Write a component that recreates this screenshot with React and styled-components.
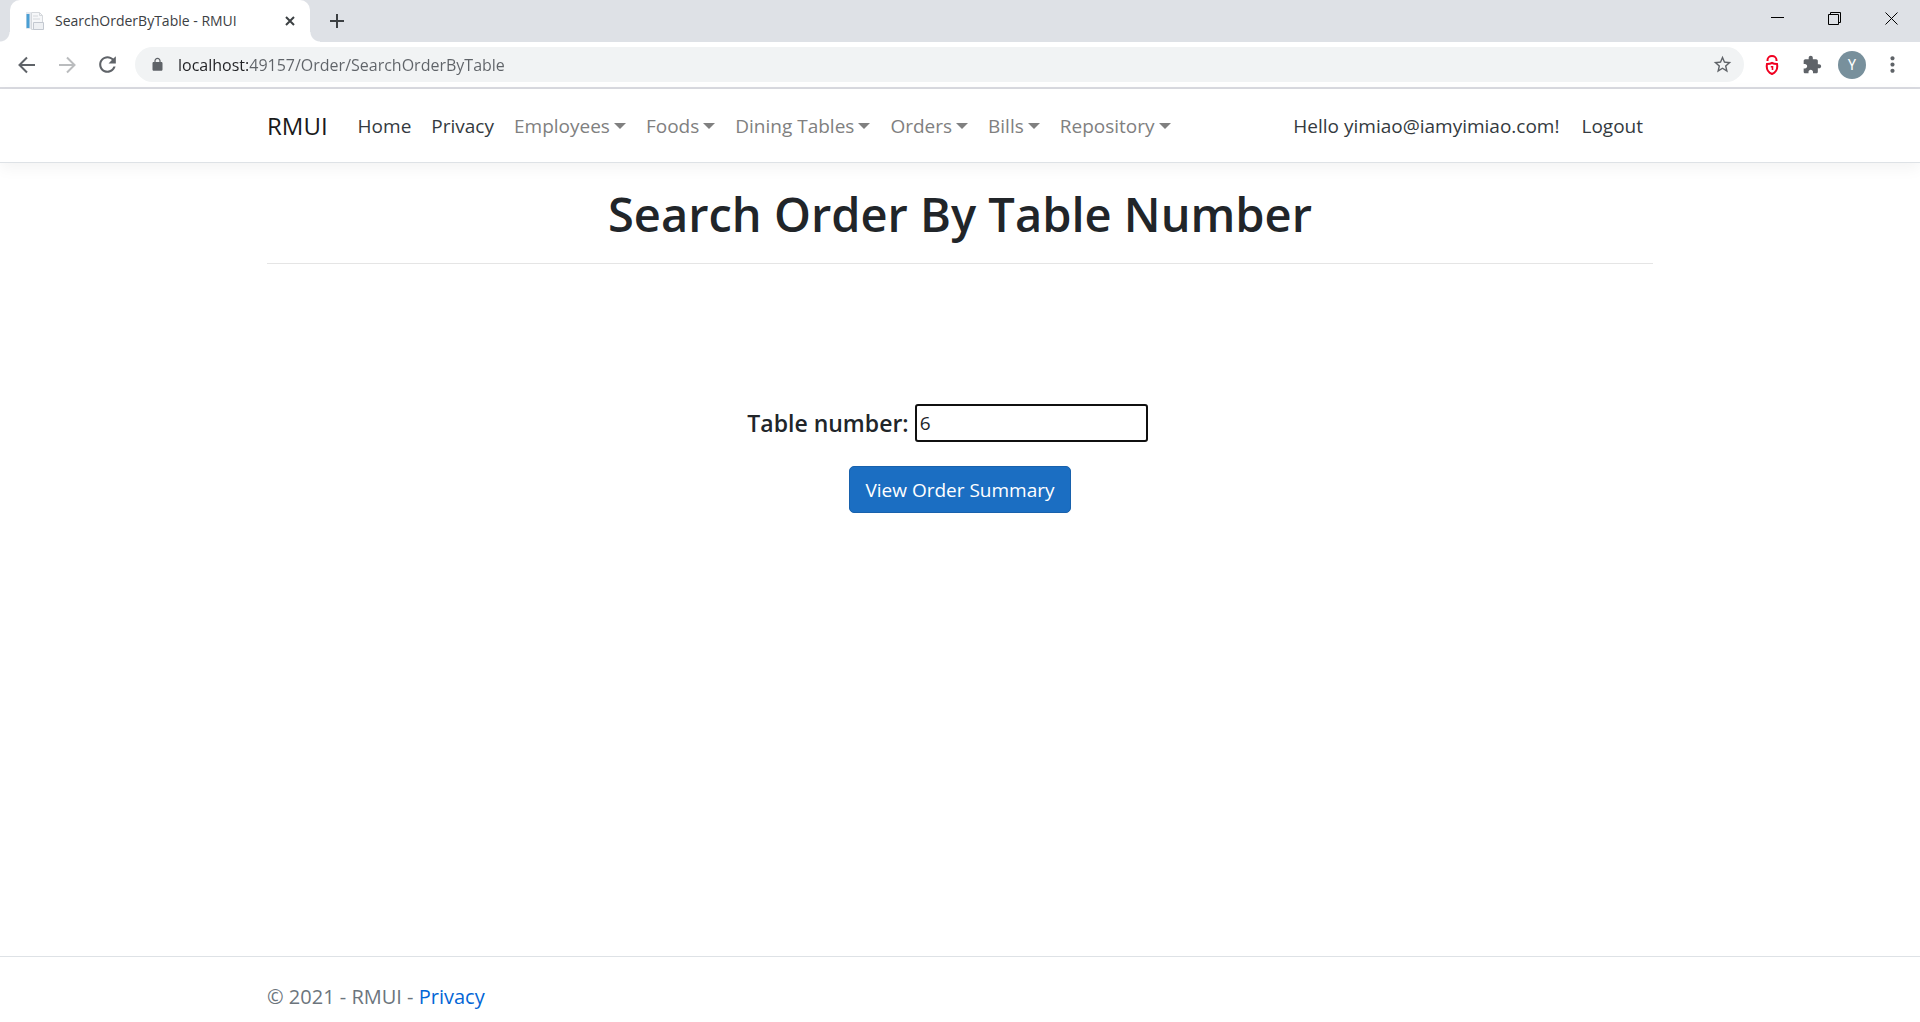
import React, { useState } from "react";
import styled, { createGlobalStyle } from "styled-components";

const GlobalStyle = createGlobalStyle`
  *, *::before, *::after { box-sizing: border-box; }
  body {
    margin: 0;
    background: #fff;
    color: #212529;
    font: 400 19px/30px "Open Sans", "Noto Sans", sans-serif;
  }
  button, input { font: inherit; color: inherit; }
`;

const Window = styled.div`
  display: flex;
  flex-direction: column;
  min-height: 100vh;
`;

const TabStrip = styled.div`
  display: flex;
  justify-content: space-between;
  height: 42px;
  background: #dee1e6;
`;

const TabGroup = styled.div`
  display: flex;
  padding-left: 10px;
`;

const Tab = styled.div`
  position: relative;
  display: flex;
  align-items: center;
  gap: 10px;
  width: 300px;
  padding: 0 12px 0 15px;
  border-radius: 10px 10px 0 0;
  background: #fff;
  &::before, &::after {
    content: "";
    position: absolute;
    bottom: 0;
    width: 10px;
    height: 10px;
  }
  &::before { left: -10px; background: radial-gradient(circle at 0 0, #dee1e6 9px, #fff 10px); }
  &::after { right: -10px; background: radial-gradient(circle at 100% 0, #dee1e6 9px, #fff 10px); }
`;

const TabTitle = styled.span`
  flex: 1;
  font-size: 14px;
  line-height: 20px;
  color: #3c4043;
  white-space: nowrap;
`;

const IconButton = styled.button`
  display: flex;
  align-items: center;
  justify-content: center;
  flex: none;
  width: ${(p) => p.$width || 40}px;
  height: ${(p) => p.$height || 40}px;
  padding: 0;
  border: 0;
  background: none;
  color: ${(p) => p.$color || "#5f6368"};
  svg { display: block; }
`;

const WindowControls = styled.div`
  display: flex;
`;

const Toolbar = styled.div`
  display: flex;
  align-items: center;
  height: 47px;
  padding: 0 8px 0 7px;
  border-bottom: 2px solid #d9dae0;
  background: #fff;
`;

const AddressBar = styled.div`
  flex: 1;
  display: flex;
  align-items: center;
  height: 35px;
  margin: 0 8px;
  padding: 0 2px 0 15px;
  border-radius: 18px;
  background: #f1f3f4;
  color: #5f6368;
`;

const AddressInput = styled.input`
  flex: 1;
  min-width: 0;
  height: 30px;
  margin-left: 13px;
  padding: 0;
  border: 0;
  outline: 0;
  font-size: 16px;
  color: #5f6368;
  background: linear-gradient(to right, #202124 70px, #5f6368 70px);
  background-clip: text;
  -webkit-text-fill-color: transparent;
`;

const Avatar = styled.span`
  display: flex;
  align-items: center;
  justify-content: center;
  width: 28px;
  height: 28px;
  border-radius: 50%;
  background: #78909c;
  color: #fff;
  font: 400 14px/20px Roboto, sans-serif;
`;

const Container = styled.div`
  width: 100%;
  max-width: 1426px;
  margin: 0 auto;
  padding: 0 20px;
`;

const Header = styled.header`
  border-bottom: 1px solid #dee2e6;
  box-shadow: 0 5px 15px rgba(0, 0, 0, 0.05);
`;

const Nav = styled.nav`
  display: flex;
  align-items: center;
  height: 73px;
`;

const Brand = styled.a`
  margin-right: 20px;
  font-size: 24px;
  line-height: 38px;
  color: #1a1a1a;
  text-decoration: none;
`;

const NavList = styled.ul`
  display: flex;
  align-items: center;
  gap: ${(p) => (p.$end ? "2px" : "0")};
  margin: ${(p) => (p.$end ? "0 0 0 auto" : "0")};
  padding: 0;
  list-style: none;
`;

const NavLink = styled.a`
  display: flex;
  align-items: center;
  gap: 4px;
  padding: 10px;
  color: ${(p) => (p.$muted ? "#808080" : "#343a40")};
  text-decoration: none;
  white-space: nowrap;
`;

const Caret = styled.span`
  border-top: 6px solid currentColor;
  border-left: 6px solid transparent;
  border-right: 6px solid transparent;
`;

const Main = styled.main`
  flex: 1;
  text-align: center;
`;

const Title = styled.h1`
  margin: 0;
  padding: 21px 0 18px;
  border-bottom: 1px solid #e5e5e5;
  font-size: 47px;
  line-height: 61px;
  font-weight: 600;
`;

const Form = styled.form`
  display: flex;
  flex-direction: column;
  align-items: center;
  gap: 24px;
  padding-top: 140px;
`;

const Field = styled.div`
  display: flex;
  align-items: center;
  gap: 6px;
  padding-right: 25px;
`;

const Label = styled.label`
  font-size: 23px;
  line-height: 30px;
  font-weight: 600;
`;

const NumberInput = styled.input`
  width: 233px;
  height: 38px;
  padding: 0 3px;
  border: 2px solid #101010;
  border-radius: 3px;
  outline: 0;
  background: #fff;
`;

const SubmitButton = styled.button`
  height: 47px;
  padding: 0 15px;
  border: 1px solid #1861ac;
  border-radius: 5px;
  background: #1b6ec2;
  color: #fff;
`;

const Footer = styled.footer`
  padding: 21px 0 6px;
  border-top: 1px solid #dee2e6;
  color: #6c757d;
  font-size: 20px;
  line-height: 38px;
`;

const FooterLink = styled.a`
  color: #0366d6;
  text-decoration: none;
`;

const Favicon = () => (
  <svg width="20" height="20" viewBox="0 0 20 20" aria-hidden="true">
    <path d="M1 1h5v17H1z" fill="#e6e9ee" />
    <path d="M6.500 1.500h8l3 3v14h-11z" fill="#f6f7f9" stroke="#d5d8dc" />
    <path d="M14.500 1.500v3h3" fill="none" stroke="#d5d8dc" />
    <path d="M1.500 3h3v14h-3z" fill="#4a9fd4" />
    <path d="M8 5h5M8 8h7" stroke="#d5d8dc" />
    <path d="M8.500 11.500h10v7h-10z" fill="#eef0f3" stroke="#c3c8d0" />
  </svg>
);

const Stroke = ({ d, size = 20, width = 2 }) => (
  <svg width={size} height={size} viewBox={`0 0 ${size} ${size}`} fill="none" stroke="currentColor" strokeWidth={width} aria-hidden="true">
    <path d={d} />
  </svg>
);

const Glyph = ({ d, size = 20 }) => (
  <svg width={size} height={size} viewBox="0 0 24 24" fill="currentColor" aria-hidden="true">
    <path d={d} />
  </svg>
);

const PadlockShield = () => (
  <svg width="14" height="20" viewBox="0 0 14 20" fill="none" stroke="#f00020" strokeWidth="2" aria-hidden="true">
    <path d="M2.500 6V5a4.500 4 0 0 1 9 0V6" />
    <path d="M7 8c1.500.8 3 1 5 1 .8 4-.5 8-5 10C2.500 17 1.200 13 2 9c2 0 3.500-.2 5-1z" />
    <path d="M7.500 11v4M5.800 11.800h2" strokeWidth="1.600" />
  </svg>
);

const icons = {
  reload: "M17.65 6.35C16.200 4.900 14.210 4 12 4c-4.420 0-7.990 3.580-7.990 8s3.570 8 7.990 8c3.730 0 6.840-2.550 7.730-6h-2.080c-.82 2.330-3.040 4-5.650 4-3.310 0-6-2.690-6-6s2.690-6 6-6c1.660 0 3.140.69 4.220 1.780L13 11h7V4l-2.350 2.350z",
  lock: "M18 8h-1V6c0-2.760-2.240-5-5-5S7 3.240 7 6v2H6c-1.100 0-2 .9-2 2v10c0 1.100.9 2 2 2h12c1.100 0 2-.9 2-2V10c0-1.100-.9-2-2-2zM9 6c0-1.660 1.340-3 3-3s3 1.340 3 3v2H9V6z",
  star: "M22 9.240l-7.190-.62L12 2 9.190 8.630 2 9.240l5.460 4.730L5.820 21 12 17.270 18.180 21l-1.630-7.030L22 9.240zM12 15.400l-3.760 2.270 1-4.280-3.320-2.880 4.380-.38L12 6.100l1.710 4.040 4.380.38-3.320 2.880 1 4.280L12 15.400z",
  puzzle: "M20.500 11H19V7c0-1.100-.9-2-2-2h-4V3.500C13 2.120 11.880 1 10.500 1S8 2.120 8 3.500V5H4c-1.100 0-1.990.9-1.990 2v3.800H3.500c1.490 0 2.700 1.210 2.700 2.700s-1.210 2.700-2.700 2.700H2V20c0 1.100.9 2 2 2h3.800v-1.500c0-1.490 1.210-2.700 2.700-2.700 1.490 0 2.700 1.210 2.700 2.700V22H17c1.100 0 2-.9 2-2v-4h1.500c1.380 0 2.500-1.120 2.500-2.500S21.880 11 20.500 11z",
  more: "M12 8c1.100 0 2-.9 2-2s-.9-2-2-2-2 .9-2 2 .9 2 2 2zm0 2c-1.100 0-2 .9-2 2s.9 2 2 2 2-.9 2-2-.9-2-2-2zm0 6c-1.100 0-2 .9-2 2s.9 2 2 2 2-.9 2-2-.9-2-2-2z",
};

const menus = ["Employees", "Foods", "Dining Tables", "Orders", "Bills", "Repository"];

function BrowserBar() {
  const [address, setAddress] = useState("localhost:49157/Order/SearchOrderByTable");
  return (
    <>
      <TabStrip>
        <TabGroup>
          <Tab>
            <Favicon />
            <TabTitle>SearchOrderByTable - RMUI</TabTitle>
            <IconButton $width={16} $height={20} $color="#3c4043" aria-label="Close tab">
              <Stroke size={10} d="M1 1l8 8M9 1l-8 8" />
            </IconButton>
          </Tab>
          <IconButton $width={54} $height={42} $color="#3c4043" aria-label="New tab">
            <Stroke size={14} d="M7 0v14M0 7h14" />
          </IconButton>
        </TabGroup>
        <WindowControls>
          <IconButton $width={57} $height={36} $color="#000" aria-label="Minimize">
            <Stroke size={13} width={1} d="M0 5.500h13" />
          </IconButton>
          <IconButton $width={57} $height={36} $color="#000" aria-label="Restore">
            <Stroke size={13} width={1} d="M.5 2.500h10v10H.5zM2.500 2.500v-2h10v10h-2" />
          </IconButton>
          <IconButton $width={57} $height={36} $color="#000" aria-label="Close window">
            <Stroke size={13} width={1} d="M.5.5l12 12M12.500.5l-12 12" />
          </IconButton>
        </WindowControls>
      </TabStrip>
      <Toolbar>
        <IconButton aria-label="Back">
          <Stroke size={18} d="M17 9H2M9 1.500L1.500 9 9 16.500" />
        </IconButton>
        <IconButton $color="#babcbe" aria-label="Forward">
          <Stroke size={18} d="M1 9h15M9 1.500L16.500 9 9 16.500" />
        </IconButton>
        <IconButton aria-label="Reload">
          <Glyph size={25} d={icons.reload} />
        </IconButton>
        <AddressBar>
          <Glyph size={15} d={icons.lock} />
          <AddressInput aria-label="Address" spellCheck="false" value={address} onChange={(e) => setAddress(e.target.value)} />
          <IconButton aria-label="Bookmark this page">
            <Glyph size={21} d={icons.star} />
          </IconButton>
        </AddressBar>
        <IconButton aria-label="Site security"><PadlockShield /></IconButton>
        <IconButton aria-label="Extensions"><Glyph size={20} d={icons.puzzle} /></IconButton>
        <IconButton aria-label="Profile"><Avatar>Y</Avatar></IconButton>
        <IconButton aria-label="Menu"><Glyph size={25} d={icons.more} /></IconButton>
      </Toolbar>
    </>
  );
}

export default function App() {
  const [table, setTable] = useState("6");
  return (
    <Window>
      <GlobalStyle />
      <BrowserBar />
      <Header>
        <Container>
          <Nav>
            <Brand href="#">RMUI</Brand>
            <NavList>
              <li><NavLink href="#">Home</NavLink></li>
              <li><NavLink href="#">Privacy</NavLink></li>
              {menus.map((name) => (
                <li key={name}><NavLink href="#" $muted>{name}<Caret /></NavLink></li>
              ))}
            </NavList>
            <NavList $end>
              <li><NavLink href="#">Hello yimiao@iamyimiao.com!</NavLink></li>
              <li><NavLink href="#">Logout</NavLink></li>
            </NavList>
          </Nav>
        </Container>
      </Header>
      <Main>
        <Container>
          <Title>Search Order By Table Number</Title>
          <Form onSubmit={(e) => e.preventDefault()}>
            <Field>
              <Label htmlFor="table">Table number:</Label>
              <NumberInput id="table" inputMode="numeric" value={table} onChange={(e) => setTable(e.target.value)} />
            </Field>
            <SubmitButton type="submit">View Order Summary</SubmitButton>
          </Form>
        </Container>
      </Main>
      <Footer>
        <Container>© 2021 - RMUI - <FooterLink href="#">Privacy</FooterLink></Container>
      </Footer>
    </Window>
  );
}
